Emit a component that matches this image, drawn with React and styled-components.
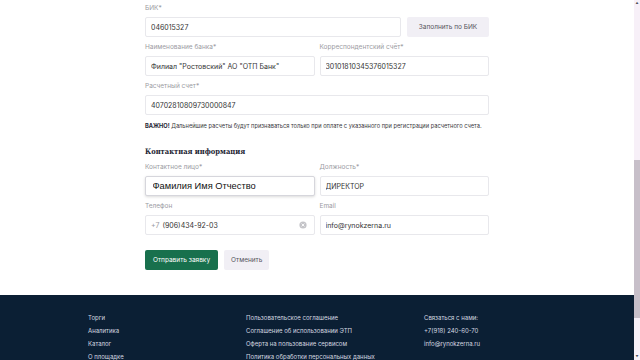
import React, {useRef, useLayoutEffect} from 'react';
import styled, {createGlobalStyle} from "styled-components";

const GlobalStyle = createGlobalStyle`
  html, body {
    margin: 0;
    padding: 0;
    height: 100%;
    overflow: hidden;
  }
  body {
    font-family: Inter, "Noto Sans", sans-serif;
    color: #333;
  }
`

// fields above the visible part of the page (scrolled out of view)
const upperRows = [
  [["ИНН*", "6164000000"], ["КПП*", "616401001"]],
  [["Полное наименование организации*", "ООО \"Рынок Зерна\""]],
  [["ОГРН*", "1026100000000"], ["Дата регистрации*", "12.03.2004"]],
  [["Юридический адрес*", "г. Ростов-на-Дону, ул. Большая Садовая, 1"]],
  [["Фактический адрес*", "г. Ростов-на-Дону, ул. Большая Садовая, 1"]],
  [["Генеральный директор*", "Иванов Иван Иванович"]],
]

const footerCols = [
  ["Торги", "Аналитика", "Каталог", "О площадке", "Новости"],
  ["Пользовательское соглашение", "Соглашение об использовании ЭТП", "Оферта на пользование сервисом", "Политика обработки персональных данных", "Тарифы"],
  ["Связаться с нами:", "+7(918) 240-60-70", "info@rynokzerna.ru"],
]

function App() {
  const viewRef = useRef(null)
  const bikRef = useRef(null)

  // the screenshot shows the page scrolled down to the bank details
  useLayoutEffect(() => {
    if (viewRef.current && bikRef.current) {
      viewRef.current.scrollTop = bikRef.current.offsetTop - 4
    }
  }, [])

  return (
    <>
      <GlobalStyle />
      <Window>
        <ScrollArea ref={viewRef}>
          <Form>
            <PageTitle>Регистрация организации</PageTitle>
            <SectionTitle>Данные организации</SectionTitle>
            {upperRows.map((row, i) => (
              <Row key={i} cols={row.length}>
                {row.map(([label, value]) => (
                  <Field key={label}>
                    <Label>{label}</Label>
                    <Input readOnly value={value} />
                  </Field>
                ))}
              </Row>
            ))}
            <SectionTitle>Банковские реквизиты</SectionTitle>

            <BikRow ref={bikRef}>
              <Field>
                <Label>БИК*</Label>
                <Input readOnly value="046015327" />
              </Field>
              <GreyButton>Заполнить по БИК</GreyButton>
            </BikRow>
            <Row cols={2}>
              <Field>
                <Label>Наименование банка*</Label>
                <Input readOnly value={'Филиал "Ростовский" АО "ОТП Банк"'} />
              </Field>
              <Field>
                <Label>Корреспондентский счёт*</Label>
                <Input readOnly value="30101810345376015327" />
              </Field>
            </Row>
            <Row cols={1}>
              <Field>
                <Label>Расчетный счет*</Label>
                <Input readOnly value="40702810809730000847" />
              </Field>
            </Row>
            <Notice>
              <b>ВАЖНО!</b> Дальнейшие расчеты будут признаваться только при оплате с указанного при регистрации расчетного счета.
            </Notice>

            <SectionTitle>Контактная информация</SectionTitle>
            <Row cols={2}>
              <Field>
                <Label>Контактное лицо*</Label>
                <Input focused readOnly value="Фамилия Имя Отчество" />
              </Field>
              <Field>
                <Label>Должность*</Label>
                <Input readOnly value="ДИРЕКТОР" />
              </Field>
            </Row>
            <Row cols={2}>
              <Field>
                <Label>Телефон</Label>
                <PhoneBox>
                  <Prefix>+7</Prefix>
                  <PhoneInput readOnly value="(906)434-92-03" />
                  <ClearIcon viewBox="0 0 8 8">
                    <circle cx="4" cy="4" r="3.6" fill="#c4c4c8" />
                    <path d="M2.6 2.6 L5.4 5.4 M5.4 2.6 L2.6 5.4" stroke="#fff" strokeWidth="0.9" />
                  </ClearIcon>
                </PhoneBox>
              </Field>
              <Field>
                <Label>Email</Label>
                <Input readOnly value="info@rynokzerna.ru" />
              </Field>
            </Row>

            <Actions>
              <PrimaryButton>Отправить заявку</PrimaryButton>
              <GreyButton small>Отменить</GreyButton>
            </Actions>
          </Form>

          <Footer>
            <FooterGrid>
              {footerCols.map((col, i) => (
                <FooterCol key={i}>
                  {col.map(item => <FooterLink key={item}>{item}</FooterLink>)}
                </FooterCol>
              ))}
            </FooterGrid>
            <Copyright>© 2024 Рынок Зерна. Все права защищены.</Copyright>
          </Footer>
        </ScrollArea>

        <Scrollbar>
          <ScrollArrow>▲</ScrollArrow>
          <Track>
            <Thumb />
          </Track>
          <ScrollArrow>▼</ScrollArrow>
        </Scrollbar>
      </Window>
    </>
  );
}

const Window = styled.div`
  display: flex;
  height: 100vh;
  background: #fff;
`

const ScrollArea = styled.div`
  flex: 1;
  overflow-y: auto;
  scrollbar-width: none;

  &::-webkit-scrollbar {
    display: none;
  }
`

const Scrollbar = styled.div`
  width: 6px;
  display: flex;
  flex-direction: column;
  background: #f7f0f8;
`

const ScrollArrow = styled.div`
  height: 6px;
  font-size: 3px;
  line-height: 6px;
  text-align: center;
  color: #505058;
`

const Track = styled.div`
  flex: 1;
  padding-top: 154px;
`

const Thumb = styled.div`
  height: 158px;
  background: #c7bfc9;
`

const Form = styled.div`
  width: 344px;
  margin: 0 auto;
  padding: 24px 0 25px;
`

const PageTitle = styled.h1`
  margin: 0 0 16px;
  font-family: "DejaVu Serif", serif;
  font-size: 16px;
  color: #1d2533;
`

const SectionTitle = styled.h3`
  margin: 17px 0 6px;
  font-family: "DejaVu Serif", serif;
  font-stretch: condensed;
  font-size: 7.5px;
  line-height: 10px;
  font-weight: bold;
  color: #1d2533;
`

const Row = styled.div`
  display: grid;
  grid-template-columns: repeat(${p => p.cols}, 1fr);
  column-gap: 5px;
  margin-bottom: 6px;
`

const BikRow = styled.div`
  display: grid;
  grid-template-columns: 1fr 82px;
  column-gap: 6px;
  align-items: end;
  margin-bottom: 6px;
`

const Field = styled.div`
  display: flex;
  flex-direction: column;
  min-width: 0;
`

const Label = styled.label`
  font-size: 6.5px;
  line-height: 9px;
  color: #9b9ba2;
  margin-bottom: 4px;
`

const Input = styled.input`
  box-sizing: border-box;
  width: 100%;
  height: 20px;
  padding: 0 ${p => p.focused ? '6.5px' : '5px'};
  border: 1px solid ${p => p.focused ? '#d6d6dc' : '#e8e8ec'};
  border-radius: 2px;
  outline: none;
  background: #fff;
  box-shadow: ${p => p.focused ? '0 1px 3px rgba(0,0,0,0.15)' : 'none'};
  font-family: ${p => p.focused ? '"Liberation Sans", Arial, sans-serif' : 'Inter, "Noto Sans", sans-serif'};
  font-size: ${p => p.focused ? '9.3px' : '7px'};
  color: ${p => p.focused ? '#111' : '#333'};
`

const PhoneBox = styled.div`
  box-sizing: border-box;
  height: 20px;
  display: flex;
  align-items: center;
  padding: 0 5px;
  border: 1px solid #e8e8ec;
  border-radius: 2px;
`

const Prefix = styled.span`
  font-size: 7px;
  color: #9b9ba2;
  margin-right: 3px;
`

const PhoneInput = styled.input`
  flex: 1;
  min-width: 0;
  border: none;
  outline: none;
  padding: 0;
  font-family: Inter, "Noto Sans", sans-serif;
  font-size: 7px;
  color: #333;
`

const ClearIcon = styled.svg`
  width: 8px;
  height: 8px;
  margin-right: 2px;
`

const Notice = styled.p`
  margin: 6px 0 0;
  font-size: 5.7px;
  line-height: 9px;
  color: #3a3a40;
  white-space: nowrap;

  b {
    font-weight: 700;
    color: #1d2533;
  }
`

const Actions = styled.div`
  display: flex;
  gap: 6px;
  margin-top: 15px;
`

const GreyButton = styled.button`
  height: 20px;
  padding: 0 ${p => p.small ? '7px' : '10px'};
  border: none;
  border-radius: 2px;
  background: #f1eff5;
  font-family: Inter, "Noto Sans", sans-serif;
  font-size: 6.5px;
  color: #55555c;
  cursor: pointer;
`

const PrimaryButton = styled.button`
  height: 20px;
  padding: 0 8px;
  border: none;
  border-radius: 2px;
  background: #18704d;
  font-family: Inter, "Noto Sans", sans-serif;
  font-size: 6.5px;
  color: #fff;
  cursor: pointer;
`

const Footer = styled.footer`
  background: #0b1f34;
  padding: 16px 0 20px;
  min-height: 111px;
`

const FooterGrid = styled.div`
  width: 458px;
  margin: 0 auto;
  display: grid;
  grid-template-columns: 158px 178px 1fr;
`

const FooterCol = styled.div`
  display: flex;
  flex-direction: column;
`

const FooterLink = styled.a`
  font-size: 6px;
  line-height: 13px;
  color: #d5d9e0;
  text-decoration: none;
  white-space: nowrap;
`

const Copyright = styled.div`
  width: 458px;
  margin: 14px auto 0;
  font-size: 6px;
  color: #7d8797;
`

export default App;
